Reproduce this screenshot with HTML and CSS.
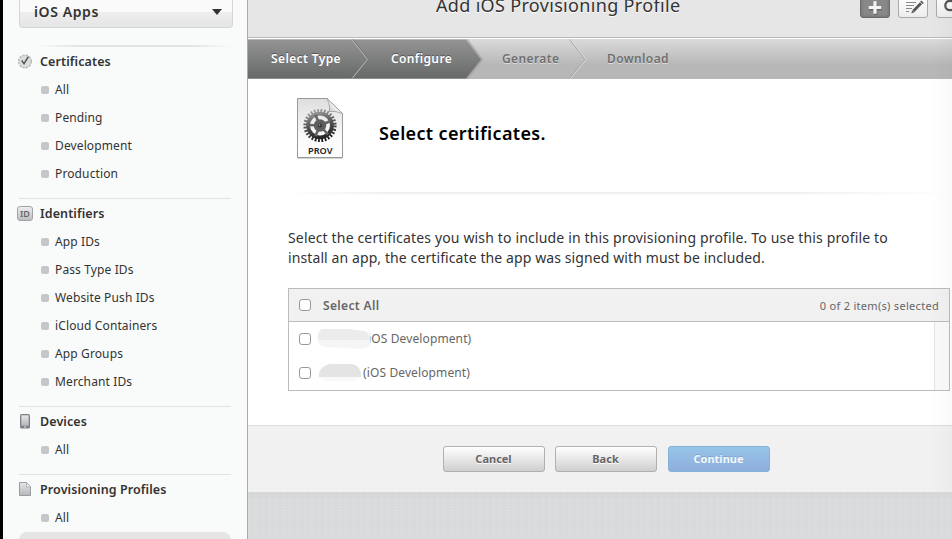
FILE: index.html
```html
<!DOCTYPE html>
<html lang="en">
<head>
<meta charset="utf-8">
<title>Add iOS Provisioning Profile</title>
<link rel="stylesheet" href="styles.css">
</head>
<body>
<div class="app">
  <aside class="sidebar">
    <div class="picker"><span>iOS Apps</span><i class="caret"></i></div>
    <div class="soft-rule"></div>
    <section class="group first">
      <h2><svg class="icon" width="16" height="16" viewBox="0 0 16 16"><circle cx="8" cy="8.500" r="6.300" fill="#dcdddd" stroke="#b5b6b8" stroke-width="1.500" stroke-dasharray="2.200 1.100"/><circle cx="8" cy="8.500" r="5.500" fill="#dcdddd"/><path d="M4.700 7.500 7 10.600 11.400 3.600" fill="none" stroke="#555" stroke-width="1.500"/></svg>Certificates</h2>
      <ul><li>All</li><li>Pending</li><li>Development</li><li>Production</li></ul>
    </section>
    <section class="group">
      <h2><span class="icon id-badge">ID</span>Identifiers</h2>
      <ul><li>App IDs</li><li>Pass Type IDs</li><li>Website Push IDs</li><li>iCloud Containers</li><li>App Groups</li><li>Merchant IDs</li></ul>
    </section>
    <section class="group">
      <h2><svg class="icon" width="16" height="16" viewBox="0 0 16 16"><defs><linearGradient id="metal" x2="0" y2="1"><stop stop-color="#e6e7e8"/><stop offset="1" stop-color="#b5b6ba"/></linearGradient></defs><rect x="3" y="1" width="10" height="14.500" rx="1.500" fill="#7e8086"/><rect x="4.300" y="2.300" width="7.400" height="10.400" fill="url(#metal)"/><rect x="7" y="13.400" width="2" height="1.200" fill="#d0d0d3"/></svg>Devices</h2>
      <ul><li>All</li></ul>
    </section>
    <section class="group">
      <h2><svg class="icon" width="16" height="16" viewBox="0 0 16 16"><path d="M2.500 1.500H9.500L13.500 6V14.500H2.500Z" fill="url(#metal)" stroke="#9b9ca1"/><path d="M9.500 1.500V6H13.500Z" fill="#f6f6f6" stroke="#a5a6aa" stroke-width=".8"/></svg>Provisioning Profiles</h2>
      <ul><li>All</li></ul>
    </section>
    <div class="active-row"></div>
  </aside>

  <main class="main">
    <header class="header">
      <h1>Add iOS Provisioning Profile</h1>
      <div class="tools">
        <span class="tool dark"><svg width="28" height="22" viewBox="0 0 28 22"><path d="M14 5.500V18M7.700 11.800H20.300" stroke="#666" stroke-width="3.400" transform="translate(.5 1)"/><path d="M14 5.200V17.800M7.700 11.500H20.300" stroke="#f4f4f4" stroke-width="3.200"/></svg></span>
        <span class="tool"><svg width="28" height="22" viewBox="0 0 28 22"><path d="M7 6.500H17M7 9.500H15M7 12.500H13M7 15.500H10" stroke="#888" stroke-width="1.100"/><path d="M14.500 15 22 7.300" stroke="#555" stroke-width="2.800"/><path d="M12.300 17.200 13.200 14.200 15.500 16.300Z" fill="#555"/><path d="M21.800 5 24.200 7.500" stroke="#555" stroke-width="1.800"/></svg></span>
        <span class="tool"><svg width="28" height="22" viewBox="0 0 28 22"><circle cx="13" cy="9.500" r="4.700" fill="none" stroke="#555" stroke-width="2.300"/><path d="M16.500 13.500 21 17.500" stroke="#555" stroke-width="3"/></svg></span>
      </div>
    </header>
    <nav class="steps">
      <svg class="step-shape" width="704" height="39" viewBox="0 0 704 39">
        <defs><linearGradient id="done" x2="0" y2="1"><stop stop-color="#949494"/><stop offset="1" stop-color="#676868"/></linearGradient></defs>
        <path d="M219 0 234 20 219 39" fill="none" stroke="#888" stroke-opacity=".4" stroke-width="2"/>
        <path d="M0 0H218L233 20 218 39H0Z" fill="url(#done)"/>
        <path d="M105 0 120.500 20 105 39" fill="none" stroke="#707070"/><path d="M104 0 119.500 20 104 39" fill="none" stroke="#b9b9b9"/>
        <path d="M322.500 0 338 20 322.500 39" fill="none" stroke="#e0e0e0"/><path d="M321.500 0 337 20 321.500 39" fill="none" stroke="#a5a5a5"/>
      </svg>
      <span class="s1">Select Type</span><span class="s2">Configure</span><span class="s3 todo">Generate</span><span class="s4 todo">Download</span>
    </nav>
    <div class="content">
      <div class="title-row">
        <svg width="50" height="64" viewBox="0 0 50 64">
          <defs><linearGradient id="paper" x2="0" y2="1"><stop stop-color="#dedede"/><stop offset=".65" stop-color="#fafafa"/><stop offset="1" stop-color="#fff"/></linearGradient>
          <linearGradient id="gear" gradientUnits="userSpaceOnUse" x1="20" y1="11" x2="28" y2="44"><stop stop-color="#aaa"/><stop offset=".5" stop-color="#555"/><stop offset="1" stop-color="#1a1a1a"/></linearGradient>
          <linearGradient id="fold" x1="0" y1="1" x2="1" y2="0"><stop stop-color="#bbb"/><stop offset=".6" stop-color="#fff"/></linearGradient></defs>
          <path d="M2.500 3H33L47.500 17V62H2.500Z" fill="#aaa" opacity=".5"/>
          <path d="M2.500 1.500H32L47.500 16.500V60.500H2.500Z" fill="url(#paper)" stroke="#999"/>
          <path d="M32 1.500Q36 10 34 14.500 40 13.500 47.500 16.500Z" fill="url(#fold)" stroke="#999" stroke-width=".8"/>
          <g fill="none" stroke="url(#gear)"><circle cx="25" cy="28.500" r="14.800" stroke-width="3.600" stroke-dasharray="1.800 1.522"/><circle cx="25" cy="28.500" r="11.900" stroke-width="3.800"/></g>
          <path d="M25 28.500 20.500 18M25 28.500 35.500 24M25 28.500 33 37.500M25 28.500 20.500 39M25 28.500 13.500 28" stroke="#646464" stroke-width="2.600"/>
          <circle cx="25" cy="28.500" r="6.200" fill="#5e5e5e"/><circle cx="25" cy="28.500" r="2" fill="#333"/><circle cx="24.500" cy="28" r=".8" fill="#aaa"/>
          <text class="prov" x="13" y="56.500" textLength="24.500" lengthAdjust="spacingAndGlyphs">PROV</text>
        </svg>
        <h3>Select certificates.</h3>
      </div>
      <div class="wide-rule"></div>
      <p class="intro"><span class="l1">Select the certificates you wish to include in this provisioning profile. To use this profile to</span><br><span class="l2">install an app, the certificate the app was signed with must be included.</span></p>
      <div class="table">
        <div class="table-head"><i class="check"></i><b>Select All</b><span class="count">0 of 2 item(s) selected</span></div>
        <div class="table-body">
          <div class="rows">
            <div class="row"><i class="check"></i><svg class="smudge" width="57" height="24" viewBox="0 0 57 24"><path d="M5 2H30L50 4 56 12 51 20Q46 23 30 21L8 20Q0 19 1 11 1 3 5 2Z" fill="#f5f5f5"/><path d="M1 13Q0 3 6 2H30L47 4Q53 7 54 13Z" fill="#ececec"/></svg><span class="dev clipped">iOS Development)</span></div>
            <div class="row"><i class="check"></i><svg class="smudge" width="46" height="24" viewBox="0 0 46 24"><path d="M2 15H44L42 19Q32 22 10 20 4 19 2 15Z" fill="#f9f9f9"/><path d="M2 16Q1 6 13 3H35Q45 5 44 16Z" fill="#e4e4e4"/></svg><span class="dev">(iOS Development)</span></div>
          </div>
          <div class="gutter"></div>
        </div>
      </div>
    </div>
    <footer class="actions"><span class="btn">Cancel</span><span class="btn">Back</span><span class="btn primary">Continue</span></footer>
    <div class="linen"></div>
    <div class="edge"></div>
  </main>
</div>
</body>
</html>
```
FILE: styles.css
```css
* { box-sizing: border-box; }
body { margin: 0; font-family: "Noto Sans", "Open Sans", sans-serif; color: #333; overflow: hidden; }
h1, h2, h3, p, ul { margin: 0; padding: 0; }
.app { display: flex; width: 952px; height: 539px; overflow: hidden; }
.sidebar { width: 248px; flex: none; border-left: 3px solid #000; border-right: 1px solid #aaa; background: #f9fbfa; padding-left: 16px; }
.picker { width: 214px; height: 28px; border: 1px solid #d5d6d6; border-top: 0; border-radius: 0 0 4px 4px; background: linear-gradient(#fafafa 0 12px, #eee 12px, #e5e5e5); display: flex; align-items: center; justify-content: space-between; padding: 0 10px 4px 14px; font-size: 14px; font-weight: 600; letter-spacing: .6px; }
.caret { border: 5px solid transparent; border-top: 6px solid #333; border-bottom: 0; }
.soft-rule { height: 2px; width: 192px; margin: 17px 0 0 20px; background: linear-gradient(90deg, transparent, #e2e3e3 20%, #e2e3e3 80%, transparent); }
.group { width: 212px; border-top: 1px solid #e1e2e2; margin-top: 11px; }
.group.first { border: 0; margin: 0; }
.group h2 { height: 28px; display: flex; align-items: center; font-size: 12.5px; font-weight: 600; letter-spacing: .1px; }
.icon { flex: none; margin: 0 7px 0 -2px; width: 16px; height: 16px; }
.id-badge { height: 15px; border: 1px solid #a2a3a8; border-radius: 3px; background: linear-gradient(#eee, #bdbec2); color: #666; font-size: 9px; line-height: 13px; text-align: center; letter-spacing: 0; }
.group ul { list-style: none; }
.group li { height: 28px; display: flex; align-items: center; font-size: 12px; padding: 1px 0 0 22px; letter-spacing: .12px; white-space: nowrap; }
.group li::before { content: ""; width: 8px; height: 8px; border-radius: 2px; background: #c5c6ca; margin-right: 6px; }
.active-row { margin-top: 1px; width: 212px; height: 28px; border-radius: 8px; background: #e5e5e5; }
.main { width: 704px; position: relative; }
.header { height: 39px; background: #e6e6e6; border-bottom: 1px solid #fff; box-shadow: inset 0 -1px #b9b9b9; display: flex; position: relative; }
h1 { font-size: 18px; font-weight: 400; line-height: 24px; margin: -7px 0 0 188px; white-space: nowrap; letter-spacing: .33px; text-shadow: 0 1px #fff; }
.tools { display: flex; gap: 8px; position: absolute; left: 612px; top: -4px; }
.tool { width: 30px; height: 22px; flex: none; border: 1px solid #aaa; border-radius: 3px; background: linear-gradient(#fff, #ededed); display: flex; justify-content: center; align-items: center; }
.tool.dark { background: #888; border-color: #6c6c6c; box-shadow: inset 0 0 3px #666; }
.steps { height: 40px; background: linear-gradient(#dadada, #b7b7b7 65%, #b7b7b7); display: flex; position: relative; align-items: center; color: #fff; font-size: 12px; font-weight: 600; letter-spacing: .38px; text-shadow: 0 -1px #555; white-space: nowrap; padding-bottom: 2px; }
.step-shape { position: absolute; left: 0; top: 0; height: 40px; }
.steps span { position: relative; }
.s1 { margin-left: 23px; width: 120px; }
.s2 { width: 111px; }
.s3 { width: 105px; }
.steps .todo { color: #6f6f6f; text-shadow: 0 1px #ddd; }
.content { height: 346px; background: #fff; padding-left: 40px; overflow: hidden; }
.title-row { display: flex; align-items: flex-start; padding: 18px 0 0 7px; height: 113px; }
.title-row h3 { font-size: 18px; font-weight: 600; line-height: 24px; margin: 24px 0 0 34px; letter-spacing: .35px; color: #000; }
.prov { font: 600 9px "Noto Sans", sans-serif; fill: #222; }
.wide-rule { height: 3px; background: linear-gradient(90deg, transparent, #ececec 15%, #ececec 75%, transparent); -webkit-mask: linear-gradient(#000, rgba(0,0,0,.2)); }
.intro { font-size: 14px; line-height: 20px; margin-top: 33px; white-space: nowrap; }
.l1 { letter-spacing: .158px; }
.l2 { letter-spacing: .1px; }
.table { width: 662px; height: 103px; margin-top: 20px; border: 1px solid #bcbcbc; }
.table-head { height: 33px; background: #f1f1f1; border-bottom: 1px solid #bcbcbc; display: flex; align-items: center; padding: 0 10px; font-size: 12px; color: #666; }
.table-head b { font-weight: 600; margin-left: 12px; letter-spacing: .35px; }
.count { margin-left: auto; font-size: 11px; letter-spacing: .3px; }
.check { width: 12px; height: 12px; flex: none; border: 1px solid #999; border-radius: 3px; background: #fff; }
.table-body { display: flex; height: 68px; }
.rows { flex: 1; }
.gutter { width: 15px; border-left: 1px solid #e3e3e3; background: #fafafa; }
.row { height: 34px; display: flex; align-items: center; padding: 0 0 1px 10px; font-size: 12px; color: #666; white-space: nowrap; letter-spacing: .12px; }
.smudge { margin-left: 6px; flex: none; }
.clipped { margin-left: -6px; clip-path: inset(0 0 0 2px); }
.actions { height: 67px; border-top: 1px solid #ddd; background: #f1f1f1; display: flex; gap: 10px; padding: 20px 0 0 195px; }
.btn { width: 102px; height: 26px; border: 1px solid #b0b0b0; border-radius: 3px; background: linear-gradient(#fff, #cfcfcf); text-align: center; font-size: 11px; font-weight: 700; line-height: 24px; padding-right: 1px; color: #666; text-shadow: 0 1px #fff; }
.primary { margin-left: 1px; border-color: #83b3d9; background: linear-gradient(#97c5e9, #8eaedb); color: #f4f8fc; text-shadow: 0 -1px #7fa5c9; }
.linen { height: 47px; background: repeating-linear-gradient(90deg, rgba(255,255,255,.06) 0 1px, transparent 1px 4px, rgba(0,0,0,.008) 4px 5px, transparent 5px 7px), repeating-linear-gradient(rgba(255,255,255,.06) 0 1px, transparent 1px 3px), linear-gradient(#d4d5d6, #d9dadb 8px); }
.edge { position: absolute; right: 0; top: 0; width: 22px; height: 492px; background: linear-gradient(90deg, transparent, rgba(0,0,0,.025)); pointer-events: none; }
```
